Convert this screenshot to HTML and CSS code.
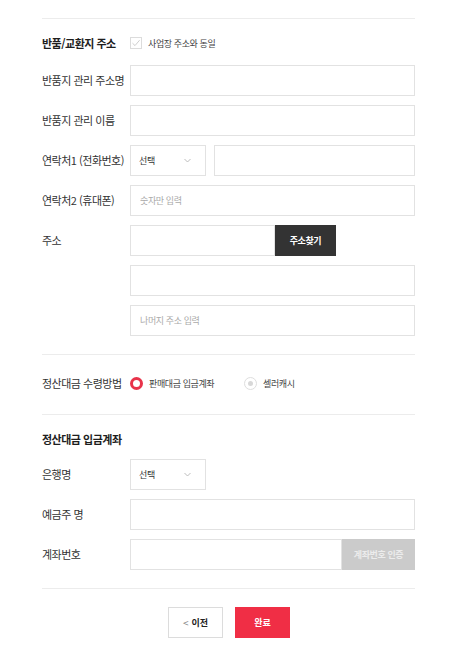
FILE: index.html
```html
<!DOCTYPE html>
<html lang="ko">
<head>
<meta charset="utf-8">
<link rel="stylesheet" href="styles.css">
</head>
<body>
<div class="page">
  <section class="section">
    <div class="form-grid">
      <h3 class="sec-title">반품/교환지 주소</h3>
      <label class="check">
        <span class="check-box"><svg width="10" height="10" viewBox="0 0 10 10"><path d="M1.5 5.2 L4 7.6 L8.6 2.2" fill="none" stroke="#cfcfcf" stroke-width="1"/></svg></span>
        <span class="small">사업장 주소와 동일</span>
      </label>

      <div class="label">반품지 관리 주소명</div>
      <input class="field" type="text">

      <div class="label">반품지 관리 이름</div>
      <input class="field" type="text">

      <div class="label">연락처1 (전화번호)</div>
      <div class="inline">
        <div class="select"><span>선택</span><svg width="7" height="5" viewBox="0 0 7 5"><path d="M0.5 1 L3.5 4 L6.5 1" fill="none" stroke="#b5b5b5" stroke-width="0.9"/></svg></div>
        <input class="field grow" type="text">
      </div>

      <div class="label">연락처2 (휴대폰)</div>
      <input class="field" type="text" placeholder="숫자만 입력">

      <div class="label">주소</div>
      <div class="stack">
        <div class="inline nogap">
          <input class="field addr" type="text">
          <button class="btn-dark">주소찾기</button>
        </div>
        <input class="field" type="text">
        <input class="field" type="text" placeholder="나머지 주소 입력">
      </div>
    </div>
  </section>

  <section class="section radio-section">
    <div class="form-grid">
      <div class="label">정산대금 수령방법</div>
      <div class="radios">
        <label class="radio-opt"><span class="radio on"></span><span class="small">판매대금 입금계좌</span></label>
        <label class="radio-opt"><span class="radio off"><span class="dot"></span></span><span class="small">셀러캐시</span></label>
      </div>
    </div>
  </section>

  <section class="section">
    <div class="form-grid">
      <h3 class="sec-title full">정산대금 입금계좌</h3>

      <div class="label">은행명</div>
      <div class="inline">
        <div class="select"><span>선택</span><svg width="7" height="5" viewBox="0 0 7 5"><path d="M0.5 1 L3.5 4 L6.5 1" fill="none" stroke="#b5b5b5" stroke-width="0.9"/></svg></div>
      </div>

      <div class="label">예금주 명</div>
      <input class="field" type="text">

      <div class="label">계좌번호</div>
      <div class="inline nogap">
        <input class="field grow" type="text">
        <button class="btn-gray">계좌번호 인증</button>
      </div>
    </div>
  </section>

  <div class="actions">
    <button class="btn-prev"><span class="chev">&lt;</span>이전</button>
    <button class="btn-done">완료</button>
  </div>
</div>
</body>
</html>
```

FILE: styles.css
```css
* { box-sizing: border-box; }

html, body {
  margin: 0;
  padding: 0;
  background: #fff;
}

body {
  font-family: "Noto Sans CJK KR", "Noto Sans", sans-serif;
  color: #333;
  font-size: 11px;
}

.page {
  margin: 18px 40px 0 42px;
}

.section {
  border-top: 1px solid #ececec;
  padding: 14px 0 18px;
}

.radio-section {
  padding: 13px 0 15px;
}

.form-grid {
  display: grid;
  grid-template-columns: 88px 1fr;
  row-gap: 9px;
  align-items: start;
}

.sec-title {
  margin: 0 0 3px;
  font-size: 11px;
  font-weight: 700;
  color: #1e1e1e;
  letter-spacing: -0.5px;
  line-height: 20px;
}

.sec-title.full {
  grid-column: 1 / -1;
  margin-bottom: 1px;
}

.label {
  line-height: 31px;
  height: 31px;
  font-size: 11px;
  letter-spacing: -0.5px;
  color: #333;
  white-space: nowrap;
}

.small {
  font-size: 9px;
  letter-spacing: -0.4px;
  color: #444;
}

.check {
  display: flex;
  align-items: center;
  gap: 6px;
  height: 20px;
}

.check-box {
  width: 12px;
  height: 12px;
  border: 1px solid #dcdcdc;
  display: flex;
  align-items: center;
  justify-content: center;
}

.field {
  display: block;
  width: 100%;
  height: 31px;
  border: 1px solid #e2e2e2;
  padding: 0 9px;
  margin: 0;
  font-family: inherit;
  font-size: 9px;
  letter-spacing: -0.4px;
  color: #333;
  outline: none;
  background: #fff;
}

.field::placeholder {
  color: #aaa;
}

.inline {
  display: flex;
  gap: 8px;
}

.inline.nogap {
  gap: 0;
}

.grow {
  flex: 1;
  width: auto;
  min-width: 0;
}

.stack {
  display: flex;
  flex-direction: column;
  gap: 9px;
}

.select {
  width: 76px;
  height: 31px;
  border: 1px solid #e2e2e2;
  display: flex;
  align-items: center;
  justify-content: space-between;
  padding: 0 14px 0 8px;
  font-size: 9px;
  letter-spacing: -0.4px;
  color: #333;
}

.addr {
  width: 145px;
}

.btn-dark {
  width: 61px;
  height: 31px;
  border: 0;
  background: #333;
  color: #fff;
  font-family: inherit;
  font-size: 9px;
  font-weight: 700;
  letter-spacing: -0.4px;
  padding: 0;
}

.btn-gray {
  width: 73px;
  height: 31px;
  border: 0;
  background: #cbcbcb;
  color: #ececec;
  font-family: inherit;
  font-size: 9px;
  font-weight: 700;
  letter-spacing: -0.4px;
  padding: 0;
}

.radios {
  display: flex;
  align-items: center;
  height: 31px;
}

.radio-opt {
  display: flex;
  align-items: center;
  gap: 6px;
}

.radio-opt:first-child {
  width: 114px;
}

.radio {
  width: 13px;
  height: 13px;
  border-radius: 50%;
  display: flex;
  align-items: center;
  justify-content: center;
  flex: none;
}

.radio.on {
  border: 3.5px solid #e8334a;
  background: #fff;
}

.radio.off {
  border: 1.5px solid #dedede;
  background: #fff;
}

.radio .dot {
  width: 5px;
  height: 5px;
  border-radius: 50%;
  background: #d8d8d8;
}

.actions {
  border-top: 1px solid #ececec;
  padding-top: 18px;
  display: flex;
  justify-content: center;
  gap: 12px;
  padding-left: 1px;
}

.btn-prev {
  width: 55px;
  height: 31px;
  border: 1px solid #dcdcdc;
  background: #fff;
  color: #222;
  font-family: inherit;
  font-size: 9px;
  font-weight: 700;
  padding: 0;
  display: flex;
  align-items: center;
  justify-content: center;
  gap: 3px;
}

.btn-prev .chev {
  font-weight: 400;
  color: #888;
  font-size: 10px;
}

.btn-done {
  width: 55px;
  height: 31px;
  border: 0;
  background: #f02e45;
  color: #fff;
  font-family: inherit;
  font-size: 9px;
  font-weight: 700;
  padding: 0;
}
```
